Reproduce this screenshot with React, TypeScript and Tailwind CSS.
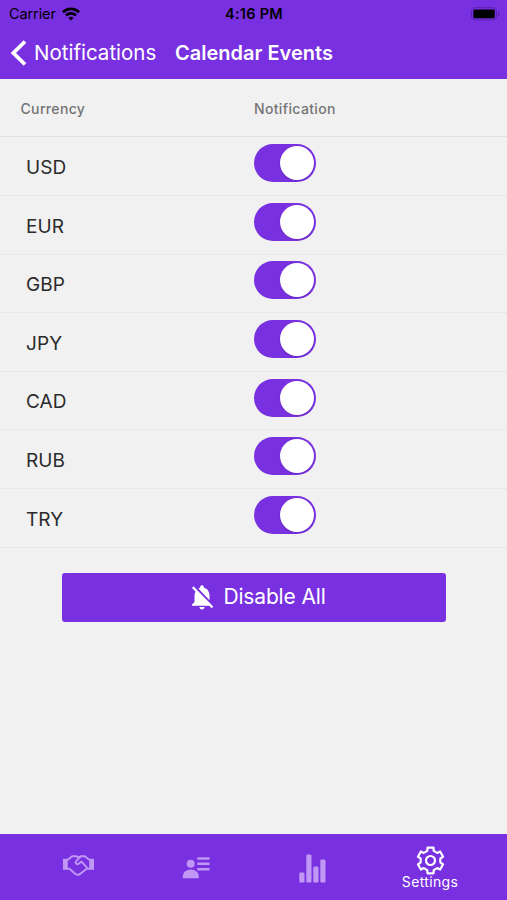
import React from 'react';
import { MdNotificationsOff } from 'react-icons/md';

const currencies = ['USD', 'EUR', 'GBP', 'JPY', 'CAD', 'RUB', 'TRY'];

const StatusBar = () => (
  <div className="grid h-7 grid-cols-3 items-center pl-[9px] pr-[6px] text-black">
    <div className="flex items-center gap-[6px]">
      <span className="text-[14.5px] tracking-[-0.1px]">Carrier</span>
      <svg width="18" height="14" viewBox="0 0 18 14" fill="none" stroke="currentColor" strokeWidth="2.6">
        <path d="M1 5.2a11.4 11.4 0 0 1 16 0" />
        <path d="M4 8.4a7.1 7.1 0 0 1 10 0" />
        <path d="M9 13.6 6.4 11a3.8 3.8 0 0 1 5.2 0Z" fill="currentColor" stroke="none" />
      </svg>
    </div>
    <span className="pr-[2px] text-center text-[14.5px] font-semibold tracking-[0.25px]">4:16 PM</span>
    <svg className="justify-self-end" width="30" height="14" viewBox="0 0 30 14">
      <rect x="0.5" y="0.7" width="25" height="12.2" rx="3.5" fill="none" stroke="#5a20b0" />
      <rect x="2.3" y="2.4" width="21.5" height="8.8" rx="1.5" fill="currentColor" />
      <path d="M27.3 5v4c1.6-.6 1.6-3.4 0-4Z" fill="#4c1a98" />
    </svg>
  </div>
);

const Toggle = () => (
  <button role="switch" aria-checked="true" className="flex h-[38px] w-[62px] items-center justify-end rounded-full bg-[#7830e0] pr-[2px]">
    <span className="size-[34px] rounded-full bg-white shadow-[0_1px_2px_rgba(0,0,0,0.12)]" />
  </button>
);

const HandshakeIcon = () => (
  <svg width="31" height="21" viewBox="0 0 31 21" fill="none" stroke="currentColor" strokeWidth="1.9" strokeLinejoin="round" strokeLinecap="round">
    <path d="M0 3.7h4.8v11H0ZM26.2 3.7H31v11h-4.8Z" fill="currentColor" stroke="none" />
    <path d="M4.8 4.8 9.2 1.3h4.3l2 1.1 2.4-1.1h4l4.3 3.5" />
    <path d="M4.8 13.7h1.700l5 4.600c1.800 1.700 4.300 1.900 6.200.3l5.300-4.400 1.300-.5h1.900" />
    <path d="M17.5 1.6 13 6.3c-1.3 1.5.9 3.8 2.6 2.5l2.9-2.2 5.3 5.8" />
  </svg>
);

const ContactsIcon = () => (
  <svg width="28" height="22" viewBox="0 0 28 22" fill="currentColor">
    <circle cx="8.7" cy="6.8" r="4" />
    <path d="M.8 21.2v-1.4c0-4.1 3.4-7.2 8-7.2s8 3.1 8 7.2v1.4Z" />
    <path d="M15.3.2h12.2v2.5H15.3ZM15.3 5.6h12.2v2.5H15.3ZM15.3 11h12.2v2.5H15.3Z" />
  </svg>
);

const StatsIcon = () => (
  <svg width="27" height="29" viewBox="0 0 27 29" fill="currentColor">
    <rect x="0.3" y="18.5" width="5.2" height="10" rx="1.2" />
    <rect x="7.3" y="0.5" width="5.2" height="28" rx="1.2" />
    <rect x="14.3" y="12.5" width="5.2" height="16" rx="1.2" />
    <rect x="21.3" y="5.5" width="5.2" height="23" rx="1.2" />
  </svg>
);

const SettingsIcon = () => (
  <svg width="29" height="29" viewBox="-14.5 -14.5 29 29" fill="none" stroke="currentColor" strokeWidth="2.2" strokeLinejoin="round">
    <path d="M-3.2-9.6-3-12.8H3L3.2-9.6Q5-8.5 6.7-7.6L9.6-9 12.6-3.8 9.9-2Q9.6 0 9.9 2L12.6 3.8 9.6 9 6.7 7.6Q5 8.5 3.2 9.6L3 12.8H-3L-3.2 9.6Q-5 8.5-6.7 7.6L-9.6 9-12.6 3.8-9.9 2Q-9.6 0-9.9-2L-12.6-3.8-9.6-9-6.7-7.6Q-5-8.5-3.2-9.6Z" />
    <circle r="4.5" />
  </svg>
);

export default function App() {
  return (
    <div className="flex h-[900px] w-[507px] flex-col overflow-hidden bg-[#f1f1f1] font-['Inter','Liberation_Sans',sans-serif]">
      <header className="h-[79px] shrink-0 bg-[#7830e0]">
        <StatusBar />
        <div className="flex h-[50px] items-center pl-[10px] text-white">
          <svg width="17" height="26" viewBox="0 0 17 26" fill="none" stroke="currentColor" strokeWidth="3.8">
            <path d="M15 1.5 3.4 13 15 24.5" />
          </svg>
          <span className="ml-[7px] w-[141px] text-[20.5px]">Notifications</span>
          <h1 className="text-[20px] font-semibold">Calendar Events</h1>
        </div>
      </header>

      <main className="flex-1">
        <div className="grid h-[58.4px] grid-cols-[254px_1fr] items-center border-b border-[#e2e2e3] text-[14px] font-medium tracking-[0.35px] text-[#747474]">
          <span className="pl-[20.5px] pt-[2px]">Currency</span>
          <span className="pt-[2px]">Notification</span>
        </div>
        {currencies.map((currency) => (
          <div key={currency} className="grid h-[58.6px] grid-cols-[254px_1fr] items-center border-b border-[#e7e7e8]">
            <span className="pl-[26px] pt-[4px] text-[19px] tracking-[0.1px] text-[#2b2b2b]">{currency}</span>
            <div className="pb-[6px]">
              <Toggle />
            </div>
          </div>
        ))}
        <button className="mx-auto mt-[25px] flex h-[49px] w-[384px] items-center justify-center gap-[6px] rounded-[3px] bg-[#7830e0] pl-[6px] text-white">
          <MdNotificationsOff className="size-[30px]" />
          <span className="text-[21px] tracking-[-0.15px]">Disable All</span>
        </button>
      </main>

      <nav className="grid h-[66px] shrink-0 grid-cols-[repeat(4,117px)] justify-center bg-[#7830e0] pb-[3px] text-[#c097f5]">
        <div className="flex items-center justify-center">
          <HandshakeIcon />
        </div>
        <div className="flex items-center justify-center pl-[2px] pt-[4px]">
          <ContactsIcon />
        </div>
        <div className="flex items-center justify-center pt-[5px]">
          <StatsIcon />
        </div>
        <div className="flex flex-col items-center pl-[2px] pt-[12px] text-white">
          <SettingsIcon />
          <span className="text-[14px] leading-[14px] tracking-[0.35px]">Settings</span>
        </div>
      </nav>
    </div>
  );
}
